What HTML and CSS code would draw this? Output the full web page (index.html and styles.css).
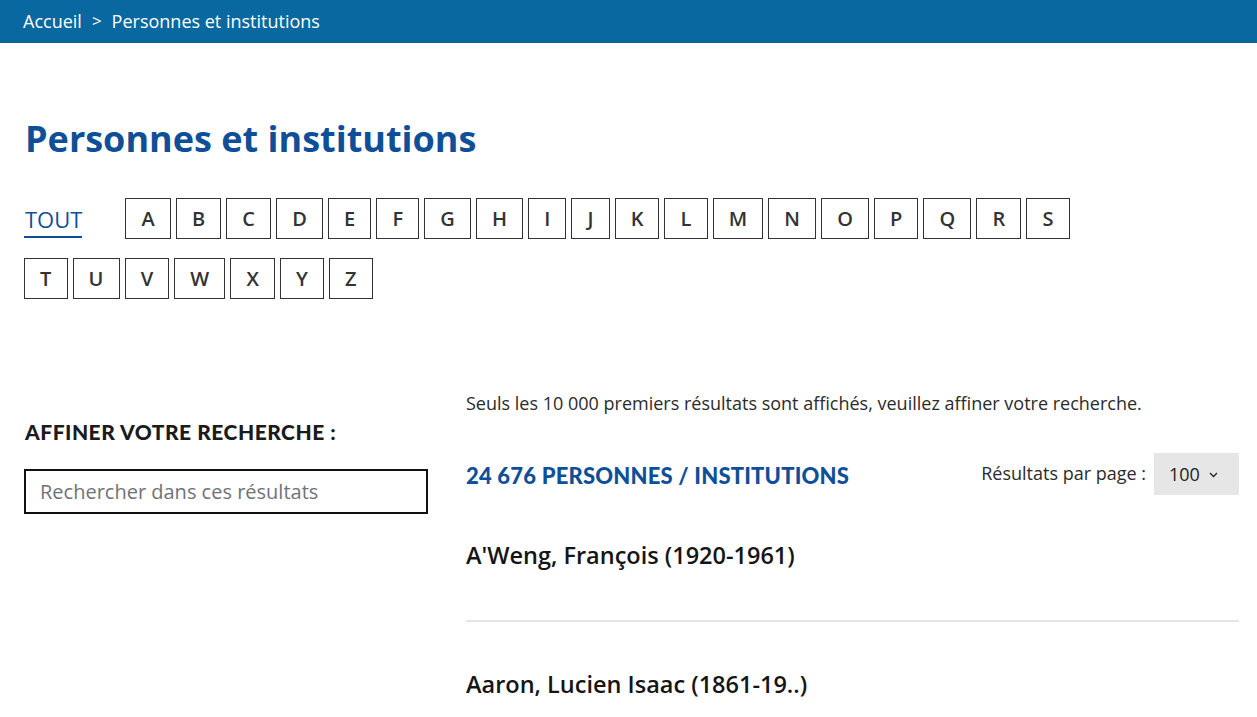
FILE: index.html
```html
<!DOCTYPE html>
<html lang="fr">
<head>
<meta charset="utf-8">
<title>Personnes et institutions</title>
<link rel="stylesheet" href="styles.css">
</head>
<body>
<nav class="breadcrumb">
  <a href="#" class="crumb">Accueil</a>
  <span class="sep">&gt;</span>
  <span class="crumb current">Personnes et institutions</span>
</nav>
<main class="page">
  <h1 class="title">Personnes et institutions</h1>
  <ul class="letters">
    <li class="all"><a href="#">TOUT</a></li>
    <li class="letter"><a href="#">A</a></li>
    <li class="letter"><a href="#">B</a></li>
    <li class="letter"><a href="#">C</a></li>
    <li class="letter"><a href="#">D</a></li>
    <li class="letter"><a href="#">E</a></li>
    <li class="letter"><a href="#">F</a></li>
    <li class="letter"><a href="#">G</a></li>
    <li class="letter"><a href="#">H</a></li>
    <li class="letter"><a href="#">I</a></li>
    <li class="letter"><a href="#">J</a></li>
    <li class="letter"><a href="#">K</a></li>
    <li class="letter"><a href="#">L</a></li>
    <li class="letter"><a href="#">M</a></li>
    <li class="letter"><a href="#">N</a></li>
    <li class="letter"><a href="#">O</a></li>
    <li class="letter"><a href="#">P</a></li>
    <li class="letter"><a href="#">Q</a></li>
    <li class="letter"><a href="#">R</a></li>
    <li class="letter"><a href="#">S</a></li>
    <li class="letter"><a href="#">T</a></li>
    <li class="letter"><a href="#">U</a></li>
    <li class="letter"><a href="#">V</a></li>
    <li class="letter"><a href="#">W</a></li>
    <li class="letter"><a href="#">X</a></li>
    <li class="letter"><a href="#">Y</a></li>
    <li class="letter"><a href="#">Z</a></li>
  </ul>

  <div class="layout">
    <aside class="filters">
      <h2 class="filters-title">Affiner votre recherche :</h2>
      <input class="search" type="text" placeholder="Rechercher dans ces résultats">
    </aside>
    <section class="results">
      <p class="notice">Seuls les 10 000 premiers résultats sont affichés, veuillez affiner votre recherche.</p>
      <div class="results-head">
        <h2 class="count">24 676 personnes / institutions</h2>
        <div class="per-page">
          <span class="per-page-label">Résultats par page :</span>
          <button class="select" type="button">100
            <svg class="chev" width="9" height="6" viewBox="0 0 9 6"><path d="M1 1l3.5 3.5L8 1" fill="none" stroke="#222" stroke-width="1.3"/></svg>
          </button>
        </div>
      </div>
      <ul class="list">
        <li class="item"><a href="#">A'Weng, François (1920-1961)</a></li>
        <li class="item"><a href="#">Aaron, Lucien Isaac (1861-19..)</a></li>
      </ul>
    </section>
  </div>
</main>
</body>
</html>
```

FILE: styles.css
```css
* { box-sizing: border-box; }
html, body { margin: 0; padding: 0; }
body {
  font-family: "Open Sans", "Liberation Sans", sans-serif;
  color: #222;
  background: #fff;
  overflow: hidden;
}
a { color: inherit; text-decoration: none; }
ul { list-style: none; margin: 0; padding: 0; }

.breadcrumb {
  height: 43px;
  background: #08689f;
  color: #fff;
  display: flex;
  align-items: center;
  padding: 0 0 2px 23px;
  font-size: 18px;
  gap: 10px;
}
.breadcrumb .sep { font-size: 17px; }

.page {
  padding: 0 18px 0 24px;
}
.title {
  margin: 72px 0 0 1px;
  font-size: 36px;
  line-height: 48px;
  font-weight: 700;
  color: #0f4f98;
}

.letters {
  display: flex;
  flex-wrap: wrap;
  column-gap: 5px;
  row-gap: 19px;
  width: 1075px;
  margin-top: 35px;
}
.letter a {
  display: flex;
  align-items: center;
  justify-content: center;
  height: 41px;
  padding: 0 15.1px;
  border: 1px solid #333;
  font-size: 20px;
  font-weight: 600;
  color: #333;
}
.all {
  margin-right: 38px;
}
.all a {
  display: flex;
  align-items: center;
  height: 40px;
  padding: 4px 0 0 1px;
  font-size: 22px;
  color: #0f4f98;
  border-bottom: 2px solid #0f4f98;
  line-height: 1;
}

.layout {
  display: grid;
  grid-template-columns: 404px 1fr;
  column-gap: 38px;
  margin-top: 87px;
}
.filters { padding-top: 32px; }
.filters-title {
  margin: 0 0 0 1px;
  font-family: "Lato", "Open Sans", sans-serif;
  font-weight: 900;
  font-size: 21px;
  line-height: 28px;
  text-transform: uppercase;
  letter-spacing: 0.5px;
  color: #1b1b1b;
}
.search {
  display: block;
  width: 404px;
  height: 45px;
  margin-top: 23px;
  border: 2px solid #111;
  padding: 0 14px;
  font-family: "Open Sans", sans-serif;
  font-size: 20px;
  color: #222;
  outline: none;
}
.search::placeholder { color: #6f7377; }

.notice {
  margin: 5px 0 0 0;
  font-size: 18px;
  line-height: 24px;
  color: #2b2b2b;
}
.results-head {
  display: flex;
  align-items: center;
  justify-content: space-between;
  margin-top: 38px;
}
.count {
  margin: 0;
  font-family: "Lato", "Open Sans", sans-serif;
  font-weight: 900;
  font-size: 22px;
  letter-spacing: 0.2px;
  text-transform: uppercase;
  color: #0f4f98;
  padding-top: 2px;
}
.per-page {
  display: flex;
  align-items: center;
  gap: 8px;
}
.per-page-label {
  font-size: 18px;
  color: #2b2b2b;
  padding-bottom: 2px;
}
.select {
  display: flex;
  align-items: center;
  gap: 9px;
  width: 85px;
  height: 42px;
  padding: 0 0 0 15px;
  border: 0;
  background: #e6e6e6;
  font-family: "Open Sans", sans-serif;
  font-size: 18px;
  color: #222;
}
.chev { margin-top: 2px; }

.list { margin-top: 0; }
.item {
  padding: 45px 0 50px 0;
  border-bottom: 2px solid #e5e5e5;
}
.item + .item { padding-top: 47px; }
.item a {
  display: block;
  font-size: 23.5px;
  line-height: 30px;
  font-weight: 600;
  color: #151515;
}
```
